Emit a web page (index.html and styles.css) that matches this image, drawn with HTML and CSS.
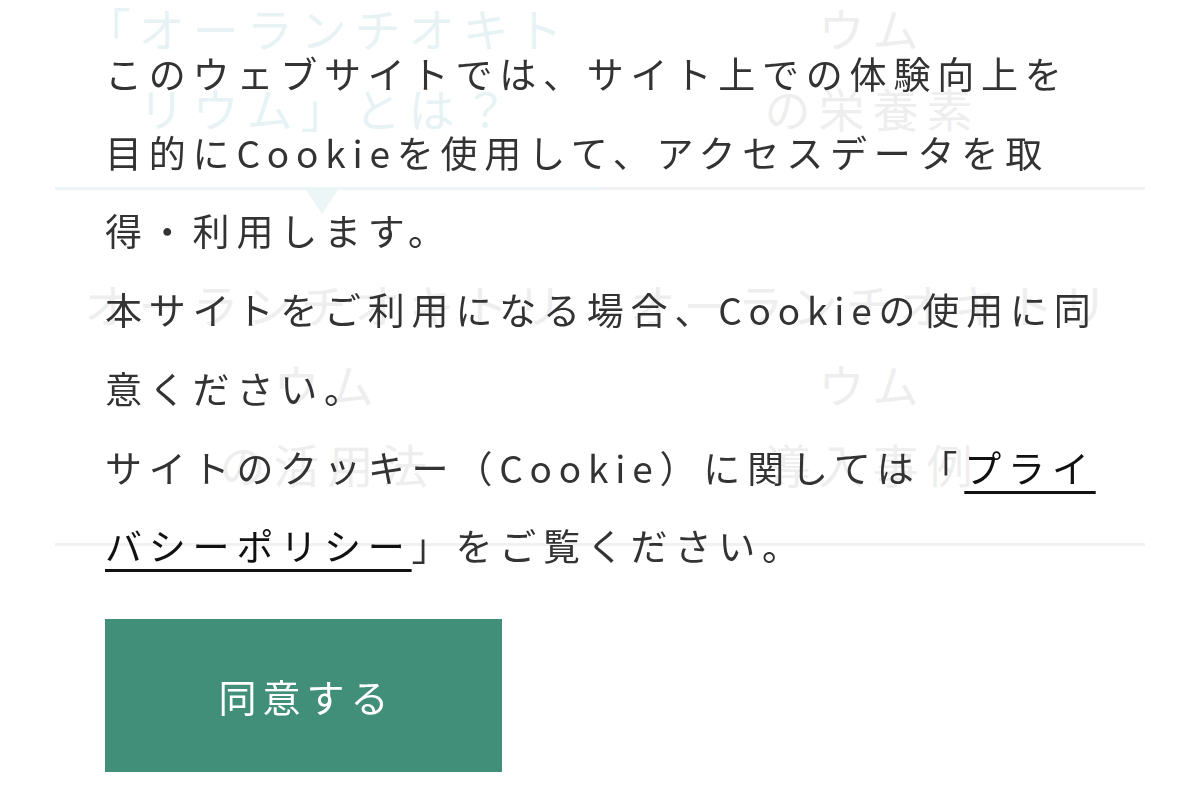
FILE: index.html
```html
<!DOCTYPE html>
<html lang="ja">
<head>
<meta charset="utf-8">
<title>Cookie</title>
<link rel="stylesheet" href="styles.css">
</head>
<body>
<div class="page">
  <nav class="menu">
    <a class="menu-item is-active">「オーランチオキトリウム」とは？</a>
    <a class="menu-item">オーランチオキトリウム<br>の栄養素</a>
    <a class="menu-item">オーランチオキトリウム<br>の活用法</a>
    <a class="menu-item">オーランチオキトリウム<br>導入事例</a>
  </nav>
</div>
<div class="cookie-overlay">
  <div class="cookie-box">
    <p class="cookie-text">このウェブサイトでは、サイト上での体験向上を目的にCookieを使用して、アクセスデータを取得・利用します。</p>
    <p class="cookie-text">本サイトをご利用になる場合、Cookieの使用に同意ください。</p>
    <p class="cookie-text">サイトのクッキー（Cookie）に関しては「<a class="cookie-link">プライバシーポリシー</a>」をご覧ください。</p>
    <button class="agree-btn" type="button">同意する</button>
  </div>
</div>
</body>
</html>
```
FILE: styles.css
```css
html, body {
  margin: 0;
  padding: 0;
  background: #ffffff;
}
body {
  font-family: "Noto Sans CJK JP", "Noto Sans", sans-serif;
  overflow: hidden;
  height: 800px;
}

/* underlying page (dimmed by the overlay) */
.page {
  padding: 0 55px;
}
.menu {
  margin-top: -166px;
  display: grid;
  grid-template-columns: 1fr 1fr;
  align-items: end;
}
.menu-item {
  position: relative;
  display: block;
  padding: 73px 20px 40px;
  border-bottom: 3px solid #8c8c8c;
  text-align: center;
  font-size: 46px;
  line-height: 80px;
  letter-spacing: 8px;
  color: #707070;
}
.menu-item.is-active {
  color: #3f96a8;
  border-bottom-color: #5fa8b0;
}
.menu-item.is-active::after {
  content: "";
  position: absolute;
  left: 50%;
  bottom: -27px;
  margin-left: -22px;
  border-left: 16px solid transparent;
  border-right: 16px solid transparent;
  border-top: 24px solid #6fb0b8;
}

/* cookie consent overlay */
.cookie-overlay {
  position: fixed;
  inset: 0;
  background: rgba(255, 255, 255, 0.88);
}
.cookie-box {
  padding: 34px 100px 0 105px;
}
.cookie-text {
  margin: 0;
  font-size: 37px;
  line-height: 78.7px;
  letter-spacing: 6.8px;
  color: #333333;
}
.cookie-link {
  color: #111111;
  text-decoration: underline;
  text-decoration-thickness: 3px;
  text-underline-offset: 8px;
}
.agree-btn {
  display: block;
  margin-top: 34px;
  width: 397px;
  height: 153px;
  border: none;
  background: #418f79;
  color: #ffffff;
  font-family: "Noto Sans CJK JP", "Noto Sans", sans-serif;
  font-size: 38px;
  letter-spacing: 6px;
  padding: 0 0 0 6px;
}
```
